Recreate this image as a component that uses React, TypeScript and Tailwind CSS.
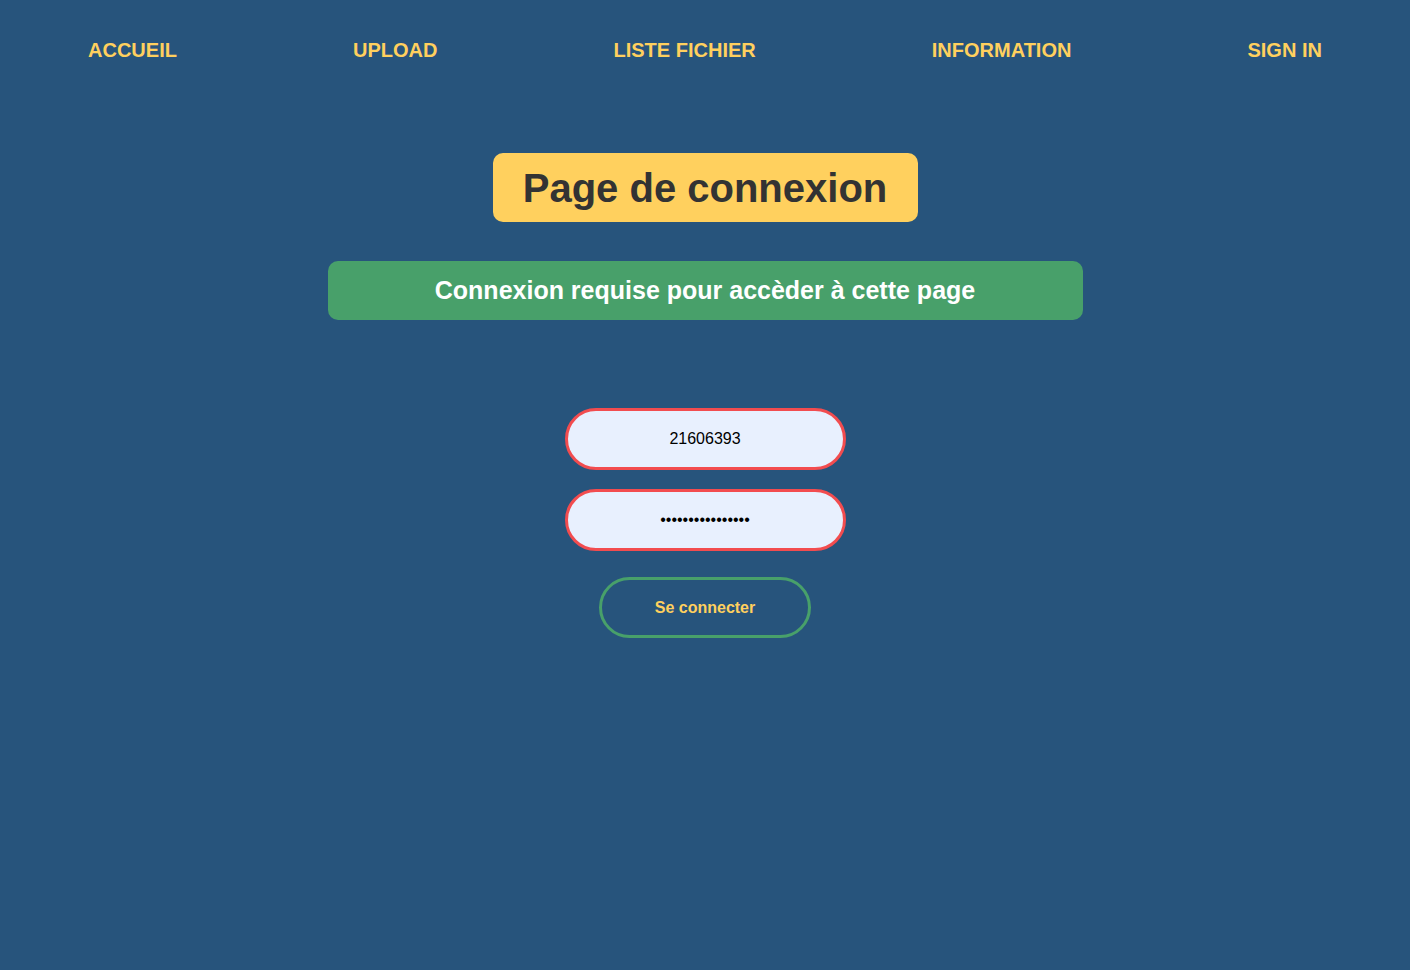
import React from "react";

export default function App() {
  const nav = ["ACCUEIL", "UPLOAD", "LISTE FICHIER", "INFORMATION", "SIGN IN"];
  return (
    <div
      className="min-h-[970px] w-full bg-[#27547c] flex flex-col items-center"
      style={{ fontFamily: '"Liberation Sans", Arial, sans-serif' }}
    >
      <nav className="w-full flex justify-around items-center h-[101px] pb-[1px]">
        {nav.map((n) => (
          <a key={n} className="text-[20px] font-bold text-[#ffd05e] leading-none">
            {n}
          </a>
        ))}
      </nav>
      <div className="mt-[52px] bg-[#ffd05e] rounded-[10px] px-[30px] w-[425px] h-[69px] flex items-center justify-center">
        <h1 className="text-[40px] font-bold text-[#333333] leading-none whitespace-nowrap">Page de connexion</h1>
      </div>
      <div className="mt-[39px] w-[755px] h-[59px] bg-[#48a06a] rounded-[10px] flex items-center justify-center">
        <p className="text-[25px] font-bold text-white leading-none">
          Connexion requise pour accèder à cette page
        </p>
      </div>
      <form className="mt-[88px] flex flex-col items-center gap-[19px]">
        <input
          type="text"
          defaultValue="21606393"
          className="w-[281px] h-[62px] rounded-full border-[3px] border-[#f24c4f] bg-[#e8f0fe] text-center text-[16px] text-black outline-none"
        />
        <input
          type="password"
          defaultValue="aaaaaaaaaaaaaaaa"
          className="w-[281px] h-[62px] rounded-full border-[3px] border-[#f24c4f] bg-[#e8f0fe] text-center text-[16px] text-black outline-none"
        />
        <button
          type="button"
          className="mt-[7px] w-[212px] h-[61px] rounded-full border-[3px] border-[#48a06a] bg-transparent text-[16px] font-bold text-[#ffd05e]"
        >
          Se connecter
        </button>
      </form>
    </div>
  );
}
